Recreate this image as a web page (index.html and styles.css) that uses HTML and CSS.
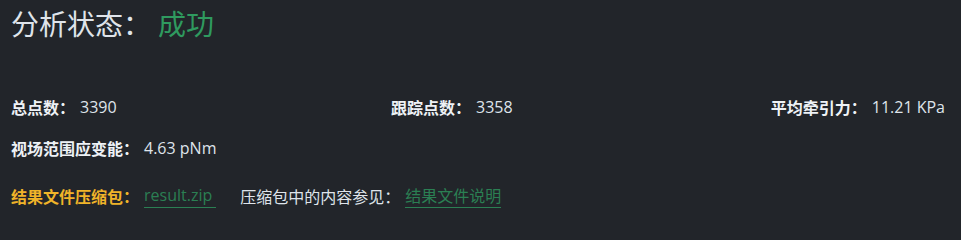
FILE: index.html
```html
<!DOCTYPE html>
<html lang="zh-CN">
<head>
<meta charset="utf-8">
<title>分析结果</title>
<link rel="stylesheet" href="styles.css">
</head>
<body>
<div class="panel">
  <h1 class="status"><span class="status-label">分析状态：</span><span class="status-value">成功</span></h1>
  <div class="stats">
    <div class="stat"><span class="label">总点数：</span><span class="value">3390</span></div>
    <div class="stat"><span class="label">跟踪点数：</span><span class="value">3358</span></div>
    <div class="stat stat-right"><span class="label">平均牵引力：</span><span class="value">11.21 KPa</span></div>
  </div>
  <div class="stat-line">
    <div class="stat"><span class="label">视场范围应变能：</span><span class="value">4.63 pNm</span></div>
  </div>
  <div class="files">
    <span class="label label-warn">结果文件压缩包：</span><a class="link link-zip" href="#">result.zip</a>
    <span class="note">压缩包中的内容参见：</span><a class="link link-doc" href="#">结果文件说明</a>
  </div>
</div>
</body>
</html>
```
FILE: styles.css
```css
html, body {
  margin: 0;
  padding: 0;
  background: #22252a;
}
body {
  font-family: "Segoe UI", "Open Sans", "Noto Sans CJK SC", sans-serif;
  color: #dfe4ea;
}
.panel {
  padding: 3px 16px 0 11px;
  display: flex;
  flex-direction: column;
}
.status {
  margin: 0;
  font-size: 28px;
  line-height: 40px;
  font-weight: normal;
  display: flex;
  align-items: center;
}
.status-label, .label, .note {
  font-family: "Noto Sans CJK SC", sans-serif;
}
.status-value {
  font-family: "Noto Sans CJK SC", sans-serif;
  color: #2f9a5f;
  margin-left: 7px;
}
.stats {
  margin-top: 52px;
  display: grid;
  grid-template-columns: 380px 1fr auto;
  font-size: 16px;
  line-height: 24px;
}
.stat {
  display: flex;
  align-items: center;
}
.label {
  font-weight: bold;
  color: #eef2f6;
}
.value {
  margin-left: 5px;
  font-size: 16px;
}
.stat-line {
  margin-top: 17px;
  font-size: 16px;
  line-height: 24px;
}
.files {
  margin-top: 23px;
  font-size: 16px;
  line-height: 24px;
  display: flex;
  align-items: center;
}
.label-warn {
  color: #f0b429;
}
.link {
  color: #2b7f53;
  text-decoration: none;
  border-bottom: 1px solid #2b7f53;
  line-height: 24px;
  margin-left: 5px;
}
.link-zip {
  font-family: "Open Sans", sans-serif;
  font-size: 16px;
  padding-right: 4px;
}
.link-doc {
  font-family: "Noto Sans CJK SC", sans-serif;
}
.note {
  margin-left: 24px;
}
```
